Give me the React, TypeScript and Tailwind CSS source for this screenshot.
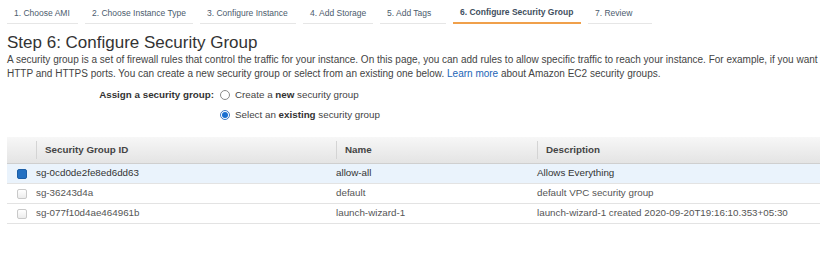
import React from "react";

const tabs = [
  { t: "1. Choose AMI", w: "w-[71px]" },
  { t: "2. Choose Instance Type", w: "w-[108px]" },
  { t: "3. Configure Instance", w: "w-[96px]" },
  { t: "4. Add Storage", w: "w-[70px]" },
  { t: "5. Add Tags", w: "w-[66px]" },
  { t: "6. Configure Security Group", w: "w-[128px]" },
  { t: "7. Review", w: "w-[64px]" },
];

const rows = [
  { id: "sg-0cd0de2fe8ed6dd63", name: "allow-all", desc: "Allows Everything", sel: true },
  { id: "sg-36243d4a", name: "default", desc: "default VPC security group", sel: false },
  { id: "sg-077f10d4ae464961b", name: "launch-wizard-1", desc: "launch-wizard-1 created 2020-09-20T19:16:10.353+05:30", sel: false },
];

function Radio({ checked }: { checked: boolean }) {
  return (
    <span
      className={
        "inline-flex h-[10px] w-[10px] shrink-0 items-center justify-center rounded-full border " +
        (checked ? "border-[#3b78c4] bg-white" : "border-[#8a8a8a] bg-white")
      }
    >
      {checked && <span className="h-[6px] w-[6px] rounded-full bg-[#1a6fd0]" />}
    </span>
  );
}

function Check({ checked }: { checked: boolean }) {
  return checked ? (
    <span className="block h-[10px] w-[10px] rounded-[2px] border border-[#1c5ea6] bg-[#2370c2]" />
  ) : (
    <span className="block h-[10px] w-[10px] rounded-[2px] border border-[#c9c9c9] bg-gradient-to-b from-white to-[#ececec]" />
  );
}

export default function App() {
  return (
    <div
      className="h-[267px] w-[820px] overflow-hidden bg-white text-[#444]"
      style={{ fontFamily: '"Liberation Sans", Arial, sans-serif' }}
    >
      {/* Tabs */}
      <div className="flex pl-[7px]">
        {tabs.map((tab, i) => (
          <div
            key={tab.t}
            className={
              "mr-[7px] flex h-[24px] shrink-0 items-center whitespace-nowrap pl-[7px] pt-[3px] text-[8.5px] " +
              tab.w +
              " " +
              (i === 5
                ? "border-b-2 border-[#f0a04b] font-semibold text-[#3f4f60]"
                : "border-b border-[#e6e6e6] text-[#4b5b6d]")
            }
          >
            {tab.t}
          </div>
        ))}
      </div>

      {/* Title */}
      <div className="pl-[7px]">
        <h1 className="mt-[9px] text-[17px] leading-[20px] text-[#333]">Step 6: Configure Security Group</h1>
        <p className="whitespace-nowrap text-[10px] leading-[14px] text-[#444]">
          A security group is a set of firewall rules that control the traffic for your instance. On this page, you can add rules to allow specific traffic to reach your instance. For example, if you want to
          <br />
          HTTP and HTTPS ports. You can create a new security group or select from an existing one below.{" "}
          <span className="text-[#1b65b6]">Learn more</span> about Amazon EC2 security groups.
        </p>
      </div>

      {/* Assign */}
      <div className="mt-[4px] flex text-[9.8px] text-[#444]">
        <div className="w-[214px] pt-[3px] text-right font-bold text-[#333]">Assign a security group:</div>
        <div className="ml-[6px] flex flex-col">
          <label className="flex h-[20px] items-center gap-[5px]">
            <Radio checked={false} />
            <span>
              Create a <b className="text-[#333]">new</b> security group
            </span>
          </label>
          <label className="flex h-[20px] items-center gap-[5px]">
            <Radio checked={true} />
            <span>
              Select an <b className="text-[#333]">existing</b> security group
            </span>
          </label>
        </div>
      </div>

      {/* Table */}
      <div className="mt-[12px] pl-[7px]">
        <div className="grid h-[27px] grid-cols-[29px_300px_201px_1fr] border-b border-[#cfcfcf] bg-gradient-to-b from-[#f7f7f7] to-[#e4e4e4] text-[9.8px] font-bold text-[#444]">
          <div className="flex items-center" />
          <div className="flex items-center">
            <span className="h-[18px] border-l border-[#d4d4d4]" />
            <span className="pl-[8px]">Security Group ID</span>
          </div>
          <div className="flex items-center">
            <span className="h-[18px] border-l border-[#d4d4d4]" />
            <span className="pl-[8px]">Name</span>
          </div>
          <div className="flex items-center">
            <span className="h-[18px] border-l border-[#d4d4d4]" />
            <span className="pl-[8px]">Description</span>
          </div>
        </div>
        {rows.map((r) => (
          <div
            key={r.id}
            className={
              "grid h-[20px] grid-cols-[29px_300px_201px_1fr] items-center border-b border-[#e3e3e3] text-[9.8px] " +
              (r.sel ? "bg-[#eaf3fc] text-[#333]" : "bg-white text-[#555]")
            }
          >
            <div className="flex justify-center pl-[1px]">
              <Check checked={r.sel} />
            </div>
            <div className="whitespace-nowrap">{r.id}</div>
            <div className="whitespace-nowrap">{r.name}</div>
            <div className="whitespace-nowrap">{r.desc}</div>
          </div>
        ))}
      </div>
    </div>
  );
}
